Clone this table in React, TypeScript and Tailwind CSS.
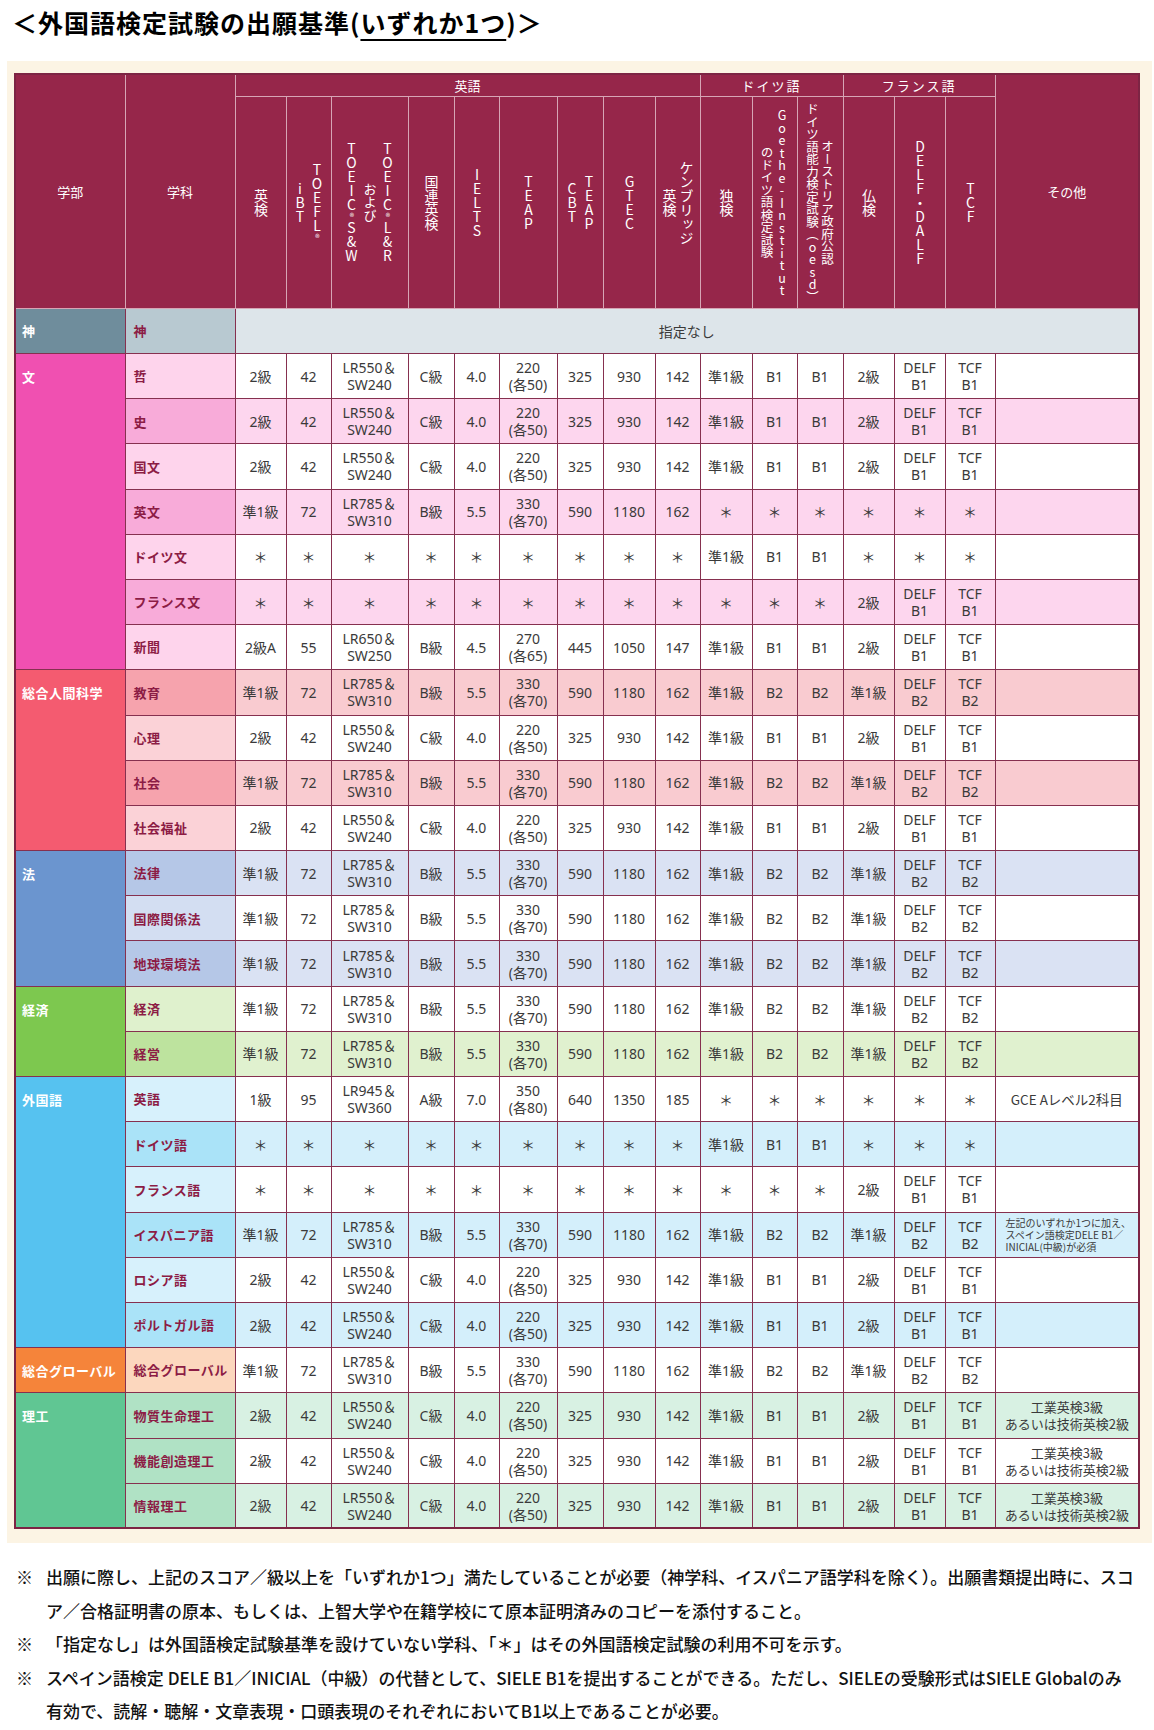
import React from "react";

type Row = { d: string; v: string[]; s: boolean; other?: React.ReactNode };
type Faculty = {
  name: string;
  fac: string;
  deptL: string;
  deptD: string;
  shade: string;
  rows: Row[];
};

const A = ["2級", "42", "LR550＆\nSW240", "C級", "4.0", "220\n(各50)", "325", "930", "142", "準1級", "B1", "B1", "2級", "DELF\nB1", "TCF\nB1"];
const B = ["準1級", "72", "LR785＆\nSW310", "B級", "5.5", "330\n(各70)", "590", "1180", "162", "準1級", "B2", "B2", "準1級", "DELF\nB2", "TCF\nB2"];
const EIBUN = ["準1級", "72", "LR785＆\nSW310", "B級", "5.5", "330\n(各70)", "590", "1180", "162", "＊", "＊", "＊", "＊", "＊", "＊"];
const DOITSU = ["＊", "＊", "＊", "＊", "＊", "＊", "＊", "＊", "＊", "準1級", "B1", "B1", "＊", "＊", "＊"];
const FURANSU = ["＊", "＊", "＊", "＊", "＊", "＊", "＊", "＊", "＊", "＊", "＊", "＊", "2級", "DELF\nB1", "TCF\nB1"];
const SHINBUN = ["2級A", "55", "LR650＆\nSW250", "B級", "4.5", "270\n(各65)", "445", "1050", "147", "準1級", "B1", "B1", "2級", "DELF\nB1", "TCF\nB1"];
const EIGO = ["1級", "95", "LR945＆\nSW360", "A級", "7.0", "350\n(各80)", "640", "1350", "185", "＊", "＊", "＊", "＊", "＊", "＊"];

const KOGYO = (
  <div className="text-center text-[13px] leading-[17px]">
    <div>工業英検3級</div>
    <div>あるいは技術英検2級</div>
  </div>
);

const faculties: Faculty[] = [
  {
    name: "文",
    fac: "bg-[#f050b1]",
    deptL: "bg-[#fed4ec]",
    deptD: "bg-[#f8abd9]",
    shade: "bg-[#fdd6ee]",
    rows: [
      { d: "哲", v: A, s: false },
      { d: "史", v: A, s: true },
      { d: "国文", v: A, s: false },
      { d: "英文", v: EIBUN, s: true },
      { d: "ドイツ文", v: DOITSU, s: false },
      { d: "フランス文", v: FURANSU, s: true },
      { d: "新聞", v: SHINBUN, s: false },
    ],
  },
  {
    name: "総合人間科学",
    fac: "bg-[#f45b70]",
    deptL: "bg-[#fbd2d7]",
    deptD: "bg-[#f6a3ad]",
    shade: "bg-[#f9cbd0]",
    rows: [
      { d: "教育", v: B, s: true },
      { d: "心理", v: A, s: false },
      { d: "社会", v: B, s: true },
      { d: "社会福祉", v: A, s: false },
    ],
  },
  {
    name: "法",
    fac: "bg-[#6b95cf]",
    deptL: "bg-[#d3def2]",
    deptD: "bg-[#b5c7e7]",
    shade: "bg-[#dae2f3]",
    rows: [
      { d: "法律", v: B, s: true },
      { d: "国際関係法", v: B, s: false },
      { d: "地球環境法", v: B, s: true },
    ],
  },
  {
    name: "経済",
    fac: "bg-[#7dc84f]",
    deptL: "bg-[#dff1cd]",
    deptD: "bg-[#bde39e]",
    shade: "bg-[#e0f1cf]",
    rows: [
      { d: "経済", v: B, s: false },
      { d: "経営", v: B, s: true },
    ],
  },
  {
    name: "外国語",
    fac: "bg-[#56c2f0]",
    deptL: "bg-[#d7f1fc]",
    deptD: "bg-[#aae3f8]",
    shade: "bg-[#d4effb]",
    rows: [
      { d: "英語", v: EIGO, s: false, other: <div className="text-center text-[13.5px]">GCE Aレベル2科目</div> },
      { d: "ドイツ語", v: DOITSU, s: true },
      { d: "フランス語", v: FURANSU, s: false },
      {
        d: "イスパニア語",
        v: B,
        s: true,
        other: (
          <div className="text-left text-[10px] leading-[12px] pl-[10px] pr-[2px]">
            <div>左記のいずれか1つに加え、</div>
            <div>スペイン語検定DELE B1／</div>
            <div>INICIAL(中級)が必須</div>
          </div>
        ),
      },
      { d: "ロシア語", v: A, s: false },
      { d: "ポルトガル語", v: A, s: true },
    ],
  },
  {
    name: "総合グローバル",
    fac: "bg-[#f5843a]",
    deptL: "bg-[#fcd7be]",
    deptD: "bg-[#fcd7be]",
    shade: "bg-white",
    rows: [{ d: "総合グローバル", v: B, s: false }],
  },
  {
    name: "理工",
    fac: "bg-[#60c693]",
    deptL: "bg-[#b0e2c5]",
    deptD: "bg-[#b0e2c5]",
    shade: "bg-[#d8f1e3]",
    rows: [
      { d: "物質生命理工", v: A, s: true, other: KOGYO },
      { d: "機能創造理工", v: A, s: false, other: KOGYO },
      { d: "情報理工", v: A, s: true, other: KOGYO },
    ],
  },
];

const colWidths = [
  "w-[110px]", "w-[110px]", "w-[51px]", "w-[45px]", "w-[77px]", "w-[46px]", "w-[45px]", "w-[58px]",
  "w-[46px]", "w-[52px]", "w-[45px]", "w-[52px]", "w-[45px]", "w-[46px]", "w-[51px]", "w-[51px]",
  "w-[50px]", "w-[144px]",
];

type VCol = { lines: string[]; small?: boolean };
const vcols: VCol[] = [
  { lines: ["英検"] },
  { lines: ["TOEFL®", "iBT"] },
  { lines: ["TOEIC®L&R", "および", "TOEIC®S&W"] },
  { lines: ["国連英検"] },
  { lines: ["IELTS"] },
  { lines: ["TEAP"] },
  { lines: ["TEAP", "CBT"] },
  { lines: ["GTEC"] },
  { lines: ["ケンブリッジ", "英検"] },
  { lines: ["独検"] },
  { lines: ["Goethe-Institut", "のドイツ語検定試験"], small: true },
  { lines: ["オーストリア政府公認", "ドイツ語能力検定試験（oesd）"], small: true },
  { lines: ["仏検"] },
  { lines: ["DELF・DALF"] },
  { lines: ["TCF"] },
];

function renderLine(l: string) {
  if (l === "および") return <span className="text-[13px]">および</span>;
  const parts = l.split("®");
  return parts.map((p, i) => (
    <React.Fragment key={i}>
      {i > 0 && <span className="text-[9px] my-[3px]">®</span>}
      {p}
    </React.Fragment>
  ));
}

function VText({ col }: { col: VCol }) {
  return (
    <div className="flex h-[211px] items-center justify-center">
      <div
        className={
          "[writing-mode:vertical-rl] [text-orientation:upright] text-center " +
          (col.small ? "text-[12.5px] leading-[15px]" : "text-[14px] leading-[17px]")
        }
      >
        {col.lines.map((l, i) => (
          <React.Fragment key={i}>
            {i > 0 && <br />}
            {renderLine(l)}
          </React.Fragment>
        ))}
      </div>
    </div>
  );
}

const TH = "bg-[#96264a] text-white font-normal border border-[#d6a5b5] p-0";
const TD =
  "border border-[#86304f] p-0 text-center align-middle text-[14px] leading-[17px] text-[#3a3a3a] whitespace-pre-line font-['Noto_Sans','Noto_Sans_CJK_JP',sans-serif]";

export default function App() {
  return (
    <div className="w-[1154px] h-[1730px] bg-white font-['Noto_Sans_CJK_JP','Noto_Sans',sans-serif] text-black">
      <div className="h-[44px] flex items-center pl-[12px] text-[25px] tracking-[1px] font-bold leading-none">
        ＜外国語検定試験の出願基準(<span className="underline decoration-2 underline-offset-[6px]">いずれか1つ</span>)＞
      </div>
      <div className="mt-[17px] ml-[7px] w-[1145px] bg-[#fcf4e4] pl-[7px] pt-[12px] pb-[14px]">
        <table className="table-fixed border-collapse w-[1126px] border-2 border-[#7d2444]">
          <colgroup>
            {colWidths.map((w, i) => (
              <col key={i} className={w} />
            ))}
          </colgroup>
          <thead>
            <tr className="h-[22px]">
              <th rowSpan={2} className={TH + " text-[13px]"}>学部</th>
              <th rowSpan={2} className={TH + " text-[13px]"}>学科</th>
              <th colSpan={9} className={TH + " text-[13px] leading-[21px]"}>英語</th>
              <th colSpan={3} className={TH + " text-[13px] leading-[21px] tracking-[2px]"}>ドイツ語</th>
              <th colSpan={3} className={TH + " text-[13px] leading-[21px] tracking-[2px]"}>フランス語</th>
              <th rowSpan={2} className={TH + " text-[13px]"}>その他</th>
            </tr>
            <tr className="h-[212px]">
              {vcols.map((c, i) => (
                <th key={i} className={TH}>
                  <VText col={c} />
                </th>
              ))}
            </tr>
          </thead>
          <tbody>
            <tr className="h-[45px]">
              <td className="border border-[#86304f] bg-[#6f8d9c] align-top pl-[6px] pt-[13px] text-[13px] leading-[17px] font-bold text-white">
                神
              </td>
              <td className="border border-[#86304f] bg-[#b8c9d1] pl-[8px] text-[13px] font-bold text-[#8c1c45]">神</td>
              <td colSpan={16} className="border border-[#86304f] bg-[#dde5ea] text-center text-[14px] text-[#3a3a3a]">
                指定なし
              </td>
            </tr>
            {faculties.map((f) =>
              f.rows.map((r, i) => {
                const bg = r.s ? f.shade : "bg-white";
                return (
                  <tr key={f.name + r.d} className="h-[45.2px]">
                    {i === 0 && (
                      <td
                        rowSpan={f.rows.length}
                        className={
                          "border border-[#86304f] align-top pl-[6px] pt-[14px] text-[13px] leading-[17px] font-bold text-white tracking-[0.5px] " +
                          f.fac
                        }
                      >
                        {f.name}
                      </td>
                    )}
                    <td
                      className={
                        "border border-[#86304f] pl-[8px] text-[13px] font-bold text-[#8c1c45] tracking-[0.5px] whitespace-nowrap " +
                        (r.s ? f.deptD : f.deptL)
                      }
                    >
                      {r.d}
                    </td>
                    {r.v.map((v, j) => (
                      <td key={j} className={TD + " " + bg}>
                        {v}
                      </td>
                    ))}
                    <td className={"border border-[#86304f] p-0 align-middle text-[#3a3a3a] " + bg}>{r.other}</td>
                  </tr>
                );
              })
            )}
          </tbody>
        </table>
      </div>
      <div className="mt-[17px] text-[17px] font-medium leading-[33.5px] text-[#111]">
        <div className="flex">
          <div className="w-[46px] pl-[16px] shrink-0">※</div>
          <div className="whitespace-nowrap">
            <div>出願に際し、上記のスコア／級以上を「いずれか1つ」満たしていることが必要（神学科、イスパニア語学科を除く）。出願書類提出時に、スコ</div>
            <div>ア／合格証明書の原本、もしくは、上智大学や在籍学校にて原本証明済みのコピーを添付すること。</div>
          </div>
        </div>
        <div className="flex">
          <div className="w-[46px] pl-[16px] shrink-0">※</div>
          <div className="whitespace-nowrap">「指定なし」は外国語検定試験基準を設けていない学科、「＊」はその外国語検定試験の利用不可を示す。</div>
        </div>
        <div className="flex">
          <div className="w-[46px] pl-[16px] shrink-0">※</div>
          <div className="whitespace-nowrap">
            <div>スペイン語検定 DELE B1／INICIAL（中級）の代替として、SIELE B1を提出することができる。ただし、SIELEの受験形式はSIELE Globalのみ</div>
            <div>有効で、読解・聴解・文章表現・口頭表現のそれぞれにおいてB1以上であることが必要。</div>
          </div>
        </div>
      </div>
    </div>
  );
}
